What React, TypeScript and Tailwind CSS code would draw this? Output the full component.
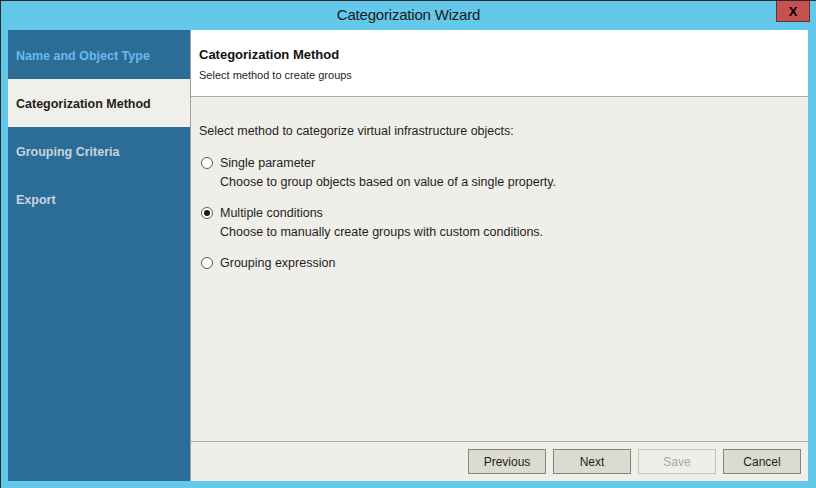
import React from 'react';

const steps = [
    {label: 'Name and Object Type', state: 'done'},
    {label: 'Categorization Method', state: 'active'},
    {label: 'Grouping Criteria', state: 'todo'},
    {label: 'Export', state: 'todo'},
];

const options = [
    {label: 'Single parameter', desc: 'Choose to group objects based on value of a single property.', checked: false},
    {label: 'Multiple conditions', desc: 'Choose to manually create groups with custom conditions.', checked: true},
    {label: 'Grouping expression', desc: '', checked: false},
];

const Radio = ({checked}: {checked: boolean}) => (
    <span className="w-[12px] h-[12px] rounded-full border border-[#5a5a5a] bg-white flex items-center justify-center shrink-0">
        {checked ? <span className="w-[6px] h-[6px] rounded-full bg-[#1a1a1a]"/> : null}
    </span>
);

const Btn = ({children, disabled}: {children: React.ReactNode; disabled?: boolean}) => (
    <div
        className={`w-[78px] h-[25px] flex items-center justify-center text-[12px] border ${disabled ? 'border-[#c4c4bc] bg-[#efeee8] text-[#a8a8a2]' : 'border-[#85857d] bg-[#dcdbd0] text-[#1e1e1e]'}`}>
        {children}
    </div>
);

export default function App() {
    return (
        <div className="w-[816px] h-[488px] bg-[#63c8e9] border-l border-t border-[#2b2b2b] flex flex-col font-['Liberation_Sans',sans-serif] overflow-hidden">
            {/*Заголовок окна*/}
            <div className="h-[29px] relative flex items-center justify-center shrink-0">
                <span className="text-[15px] text-[#1a1a1a] pb-[1px] tracking-[-0.2px]">Categorization Wizard</span>
                <div className="absolute top-[-1px] right-[6px] w-[34px] h-[22px] bg-[#c75050] border border-[#5e3434] flex items-center justify-center">
                    <span className="text-[13px] font-bold text-black leading-none">X</span>
                </div>
            </div>

            <div className="flex ml-[7px] w-[800px] h-[451px]">
                {/*Шаги*/}
                <div className="w-[182px] bg-[#2c6d97] flex flex-col pt-[1px] shrink-0">
                    {steps.map(s => (
                        <div key={s.label}
                             className={`h-[48px] flex items-center pl-[8px] pt-[2px] text-[12.5px] font-bold ${s.state === 'active' ? 'bg-[#f0efe9] text-[#1e1e1e]' : s.state === 'done' ? 'text-[#6ab8ef]' : 'text-[#c9d4dd]'}`}>
                            {s.label}
                        </div>
                    ))}
                </div>
                <div className="w-[1px] bg-[#a0a09a]"/>

                {/*Контент*/}
                <div className="flex-1 flex flex-col bg-[#efeee8]">
                    <div className="h-[67px] bg-white border-b border-[#a9a9a3] pl-[8px] pt-[16px] shrink-0">
                        <div className="text-[13px] font-bold text-[#111] leading-[18px]">Categorization Method</div>
                        <div className="text-[11px] text-[#1e1e1e] leading-[16px] mt-[3px]">Select method to create groups</div>
                    </div>

                    <div className="flex-1 pl-[8px] pt-[25px] text-[12.5px] leading-[18px] text-[#1e1e1e]">
                        <div>Select method to categorize virtual infrastructure objects:</div>
                        <div className="flex flex-col gap-[13px] mt-[14px]">
                            {options.map(o => (
                                <div key={o.label} className="flex flex-col gap-[1px]">
                                    <div className="flex items-center gap-[7px] pl-[2px]">
                                        <Radio checked={o.checked}/>
                                        <span>{o.label}</span>
                                    </div>
                                    {o.desc ? <div className="pl-[21px]">{o.desc}</div> : null}
                                </div>
                            ))}
                        </div>
                    </div>

                    <div className="h-[40px] border-t border-[#a9a9a3] flex items-center justify-end gap-[7px] pr-[7px] shrink-0">
                        <Btn>Previous</Btn>
                        <Btn>Next</Btn>
                        <Btn disabled>Save</Btn>
                        <Btn>Cancel</Btn>
                    </div>
                </div>
            </div>
        </div>
    );
}
